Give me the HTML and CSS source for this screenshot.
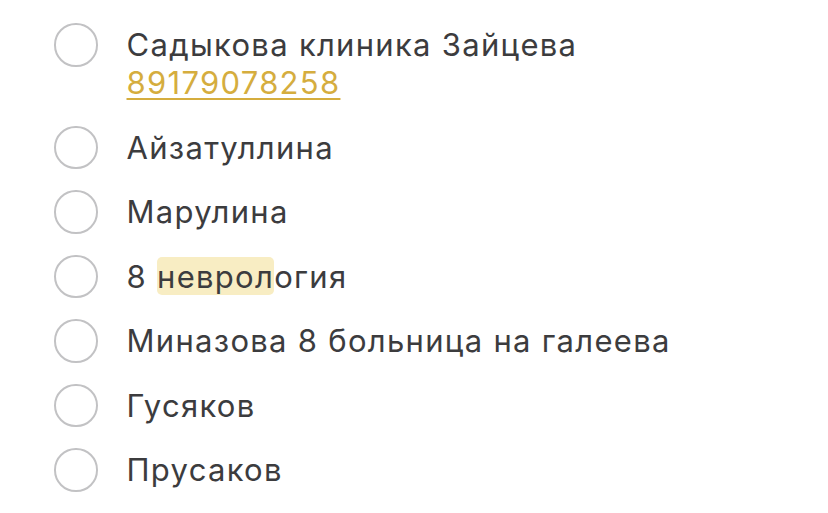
FILE: index.html
```html
<!DOCTYPE html>
<html lang="ru">
<head>
<meta charset="utf-8">
<link rel="stylesheet" href="styles.css">
</head>
<body>
<ul class="checklist">
  <li class="item"><span class="check"></span><div class="text">Садыкова клиника Зайцева<br><a class="phone" href="#">89179078258</a></div></li>
  <li class="item"><span class="check"></span><div class="text">Айзатуллина</div></li>
  <li class="item"><span class="check"></span><div class="text">Марулина</div></li>
  <li class="item"><span class="check"></span><div class="text">8 <mark class="hl">неврол</mark>огия</div></li>
  <li class="item"><span class="check"></span><div class="text">Миназова 8 больница на галеева</div></li>
  <li class="item"><span class="check"></span><div class="text">Гусяков</div></li>
  <li class="item"><span class="check"></span><div class="text">Прусаков</div></li>
</ul>
</body>
</html>
```
FILE: styles.css
```css
html, body {
  margin: 0;
  padding: 0;
  background: #ffffff;
}
body {
  width: 828px;
  height: 513px;
  overflow: hidden;
  font-family: Inter, "Noto Sans", sans-serif;
  color: #3c3c3e;
}
.checklist {
  list-style: none;
  margin: 0;
  padding: 26px 0 0 54px;
  display: flex;
  flex-direction: column;
  gap: 26.5px;
}
.item {
  display: flex;
  align-items: flex-start;
  gap: 29px;
}
.check {
  flex: none;
  width: 39.5px;
  height: 39.5px;
  margin: -3px 0;
  border: 2.5px solid #c2c2c4;
  border-radius: 50%;
}
.text {
  font-size: 31px;
  line-height: 38px;
  letter-spacing: 1.3px;
}
.phone {
  color: #d5ad3e;
  text-decoration: underline;
  text-decoration-thickness: 2px;
  text-underline-offset: 4px;
}
.hl {
  background: #f8edc3;
  color: inherit;
  border-radius: 5px;
  padding: 1px 0 0;
}
```
